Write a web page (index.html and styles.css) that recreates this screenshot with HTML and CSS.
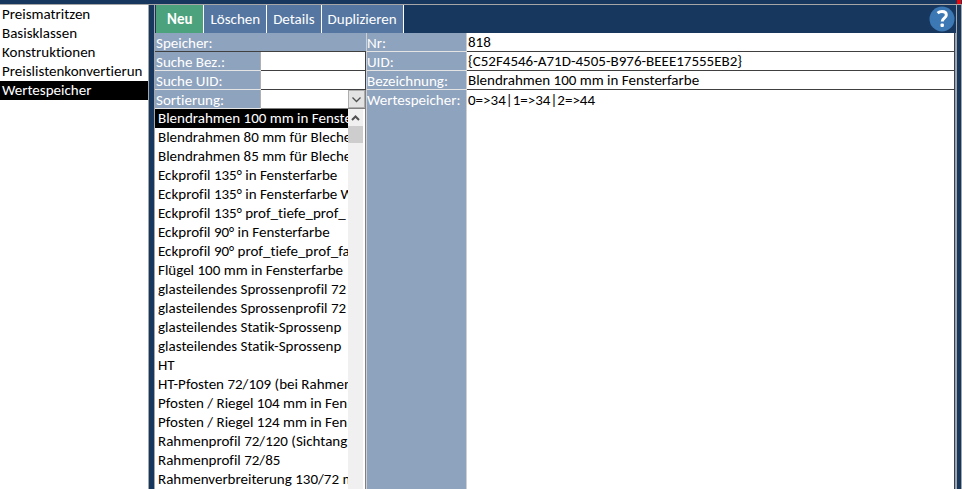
FILE: index.html
```html
<!DOCTYPE html>
<html lang="de">
<head>
    <meta charset="UTF-8">
    <meta name="viewport" content="width=device-width, initial-scale=1.0">
    <title>Wertespeicher</title>
    <link rel="stylesheet" href="styles.css">
</head>
<body>

<div class="topbar"><span class="marker"></span></div>

<div class="window">
    <nav class="sidebar">
        <a href="#">Preismatritzen</a>
        <a href="#">Basisklassen</a>
        <a href="#">Konstruktionen</a>
        <a href="#">Preislistenkonvertierun</a>
        <a href="#" class="active">Wertespeicher</a>
    </nav>

    <main class="main">
        <div class="toolbar">
            <button type="button" class="new">Neu</button>
            <button type="button">Löschen</button>
            <button type="button">Details</button>
            <button type="button">Duplizieren</button>
            <button type="button" class="help" aria-label="Hilfe">
                <svg width="26" height="26" viewBox="0 0 26 26">
                    <circle cx="13" cy="13" r="12.5" fill="#3c78b4"/>
                    <path d="M8.600 7.200C9.800 6.100 11.200 5.500 13 5.500c2.700 0 4.300 1.400 4.300 3.400 0 3.200-4.100 3.300-4.100 6.600" fill="none" stroke="#fff" stroke-width="3"/>
                    <rect x="11.500" y="17.500" width="3.400" height="3.400" rx="1" fill="#fff"/>
                </svg>
            </button>
        </div>

        <div class="content">
            <section class="search">
                <div class="field heading">Speicher:</div>
                <div class="field">
                    <label for="searchName">Suche Bez.:</label>
                    <input type="text" id="searchName">
                </div>
                <div class="field">
                    <label for="searchUid">Suche UID:</label>
                    <input type="text" id="searchUid">
                </div>
                <div class="field">
                    <label for="sort">Sortierung:</label>
                    <div class="combo">
                        <select id="sort"><option></option></select>
                        <svg width="17" height="18" viewBox="0 0 17 18">
                            <rect x="0.5" y="0.5" width="16" height="17" fill="#e3e3e3" stroke="#adadad"/>
                            <path d="M4.5 7.5l4 4 4-4" fill="none" stroke="#505050" stroke-width="1.3"/>
                        </svg>
                    </div>
                </div>
                <div class="listbox">
                    <div class="items">
                        <button type="button" class="selected">Blendrahmen 100 mm in Fenste</button>
                        <button type="button">Blendrahmen 80 mm für Bleche</button>
                        <button type="button">Blendrahmen 85 mm für Bleche</button>
                        <button type="button">Eckprofil 135° in Fensterfarbe</button>
                        <button type="button">Eckprofil 135° in Fensterfarbe W</button>
                        <button type="button">Eckprofil 135° prof_tiefe_prof_</button>
                        <button type="button">Eckprofil 90° in Fensterfarbe</button>
                        <button type="button">Eckprofil 90° prof_tiefe_prof_fa</button>
                        <button type="button">Flügel 100 mm in Fensterfarbe</button>
                        <button type="button">glasteilendes Sprossenprofil 72</button>
                        <button type="button">glasteilendes Sprossenprofil 72</button>
                        <button type="button">glasteilendes Statik-Sprossenp</button>
                        <button type="button">glasteilendes Statik-Sprossenp</button>
                        <button type="button">HT</button>
                        <button type="button">HT-Pfosten 72/109 (bei Rahmen</button>
                        <button type="button">Pfosten / Riegel 104 mm in Fen</button>
                        <button type="button">Pfosten / Riegel 124 mm in Fen</button>
                        <button type="button">Rahmenprofil 72/120 (Sichtang</button>
                        <button type="button">Rahmenprofil 72/85</button>
                        <button type="button">Rahmenverbreiterung 130/72 m</button>
                    </div>
                    <div class="scrollbar">
                        <svg width="15" height="17" viewBox="0 0 15 17">
                            <path d="M4 11l3.500-3.500 3.500 3.500" fill="none" stroke="#505050" stroke-width="2"/>
                        </svg>
                        <div class="thumb"></div>
                    </div>
                </div>
            </section>

            <section class="details">
                <div class="row">
                    <label for="number">Nr:</label>
                    <input type="text" id="number" value="818">
                </div>
                <div class="row">
                    <label for="uid">UID:</label>
                    <input type="text" id="uid" value="{C52F4546-A71D-4505-B976-BEEE17555EB2}">
                </div>
                <div class="row">
                    <label for="name">Bezeichnung:</label>
                    <input type="text" id="name" value="Blendrahmen 100 mm in Fensterfarbe">
                </div>
                <div class="row last">
                    <label for="values">Wertespeicher:</label>
                    <textarea id="values">0=&gt;34|1=&gt;34|2=&gt;44</textarea>
                </div>
            </section>
        </div>
    </main>
</div>

</body>
</html>
```
FILE: styles.css
```css
* {
    box-sizing: border-box;
}
body {
    margin: 0;
    height: 100vh;
    display: flex;
    flex-direction: column;
    overflow: hidden;
    background: #17375e;
    color: #000;
    font-family: Calibri, Carlito, Lato, sans-serif;
    font-size: 15px;
    line-height: 20px;
    font-variant-ligatures: none;
}
button, input, select, textarea {
    font: inherit;
    font-variant-ligatures: none;
    margin: 0;
    padding: 0;
    border: none;
    border-radius: 0;
    outline: none;
}
svg {
    display: block;
}
.topbar {
    flex: none;
    height: 5px;
    display: flex;
    justify-content: flex-end;
    border-bottom: 1px solid #a6a6a6;
}
.marker {
    width: 4px;
    margin-right: 1px;
    background: #f00;
}
.window {
    flex: 1;
    min-height: 0;
    display: flex;
    border-right: 1px solid #a6a6a6;
    padding-right: 4px;
}

/* navigation */
.sidebar {
    flex: none;
    width: 149px;
    background: #fff;
    border-right: 1px solid #a6a6a6;
    overflow: hidden;
}
.sidebar a {
    display: block;
    height: 19px;
    line-height: 19px;
    padding-left: 2px;
    color: #000;
    text-decoration: none;
    white-space: nowrap;
}
.sidebar .active {
    background: #000;
    color: #fff;
}

.main {
    flex: 1;
    min-width: 0;
    margin-left: 5px;
    display: flex;
    flex-direction: column;
    border-left: 1px solid #a6a6a6;
    border-right: 1px solid #a6a6a6;
}
.toolbar {
    flex: none;
    display: flex;
    height: 28px;
    padding-left: 1px;
}
.toolbar button {
    padding: 0 6px;
    background: #5576a0;
    color: #fff;
    border-right: 1px solid #fff;
}
.toolbar .new {
    padding: 0 11px;
    background: #4ca27c;
    font-weight: bold;
}
.toolbar .help {
    margin-left: auto;
    padding: 0 1px;
    background: none;
    border: none;
}

.content {
    flex: 1;
    min-height: 0;
    display: flex;
    background: #8ea3be;
}
.search {
    flex: none;
    width: 212px;
    display: flex;
    flex-direction: column;
    border-right: 1px solid #d0d0d0;
}
.field {
    flex: none;
    display: flex;
    height: 19px;
    color: #fff;
    border-bottom: 1px solid #e4e4e4;
}
.heading {
    padding-left: 1px;
    border-bottom-color: #404040;
}
.field label {
    width: 106px;
    padding-left: 1px;
    border-right: 1px solid #b0b0b0;
}
.field input, .combo {
    flex: 1;
    min-width: 0;
    height: 19px;
    background: #fff;
    border-right: 1px solid #404040;
    border-bottom: 1px solid #404040;
}
.combo {
    display: flex;
    border-right-color: #808080;
    border-bottom-color: #808080;
}
.combo select {
    flex: 1;
    appearance: none;
    background: #fff;
}

/* list of stored values */
.listbox {
    flex: 1;
    min-height: 0;
    display: flex;
    background: #fff;
    border-right: 1px solid #808080;
    padding-right: 2px;
}
.items {
    flex: 1;
    min-width: 0;
    overflow: hidden;
}
.items button {
    display: block;
    width: 100%;
    height: 19px;
    padding-left: 3px;
    background: none;
    line-height: 19px;
    text-align: left;
    white-space: nowrap;
    overflow: hidden;
}
.items .selected {
    background: #000;
    color: #fff;
}
.scrollbar {
    flex: none;
    width: 15px;
    background: #f0f0f0;
}
.thumb {
    height: 17px;
    background: #cdcdcd;
}

.details {
    flex: 1;
    min-width: 0;
    display: flex;
    flex-direction: column;
    padding-right: 1px;
}
.row {
    flex: none;
    display: flex;
    height: 19px;
}
.row label {
    flex: none;
    width: 100px;
    color: #fff;
    white-space: nowrap;
    border-right: 1px solid #d0d0d0;
    border-bottom: 1px solid #e4e4e4;
}
.row input, .row textarea {
    flex: 1;
    min-width: 0;
    padding-left: 1px;
    background: #fff;
    border-right: 1px solid #404040;
    border-bottom: 1px solid #404040;
}
.row.last {
    flex: 1;
}
.last label, .last textarea {
    border-bottom: none;
    resize: none;
}
```
